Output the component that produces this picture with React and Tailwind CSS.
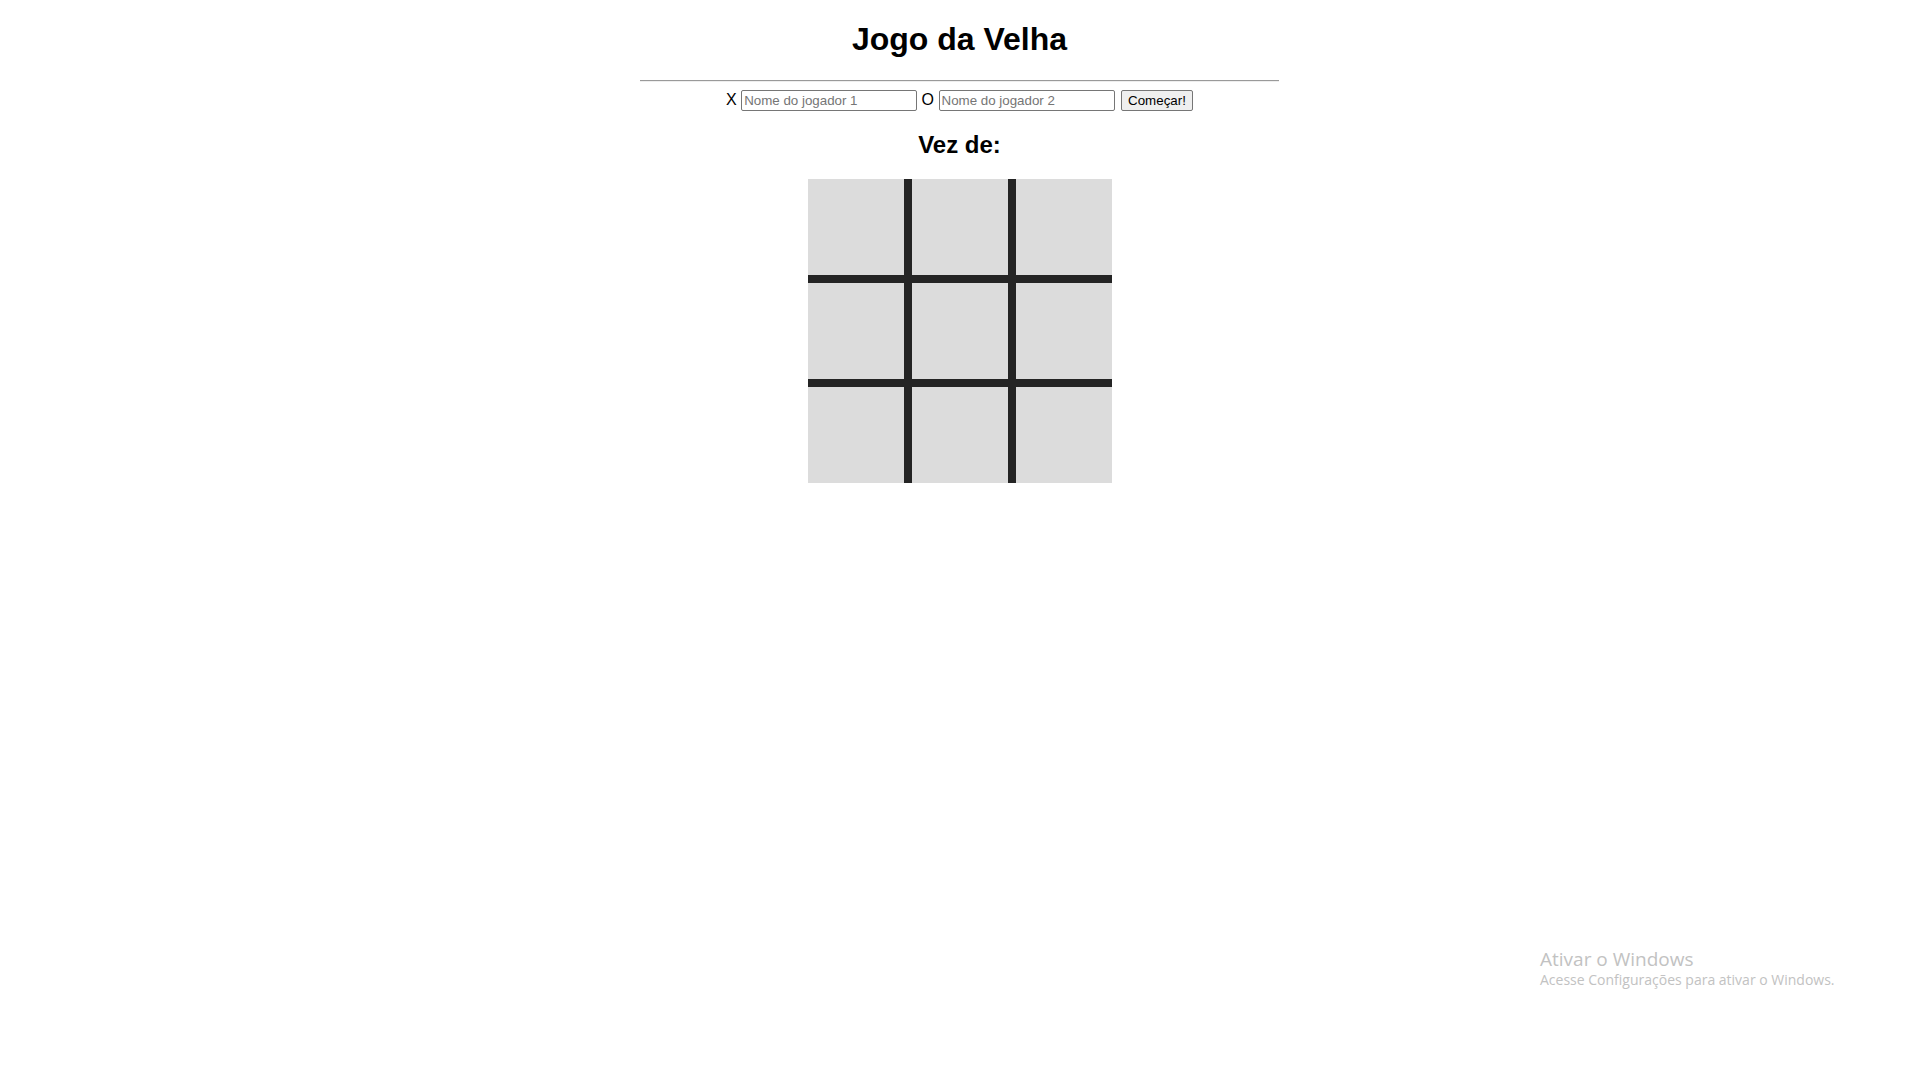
import React from 'react';

const cells = [0, 1, 2, 3, 4, 5, 6, 7, 8];

const App = () => {
    return (
        <div className="min-h-screen bg-white text-black text-center leading-[normal] font-['Liberation_Sans',Arial,sans-serif] pt-[21.44px]">
            {/* Title */}
            <h1 className="text-[32px] font-bold leading-[normal]">Jogo da Velha</h1>

            <hr className="w-1/3 mx-auto mt-[21.44px] h-[2px] border-t border-b border-t-[#9a9a9a] border-b-[#eeeeee]" />

            {/* Players */}
            <div className="mt-[8px] text-[16px]">
                X{' '}
                <input
                    type="text"
                    placeholder="Nome do jogador 1"
                    className="inline-block align-baseline w-[176px] h-[21px] px-[2px] py-[1px] border border-[#767676] rounded-[2px] text-[13.33px] text-left placeholder:text-[#757575] outline-none"
                />{' '}
                O{' '}
                <input
                    type="text"
                    placeholder="Nome do jogador 2"
                    className="inline-block align-baseline w-[176px] h-[21px] px-[2px] py-[1px] border border-[#767676] rounded-[2px] text-[13.33px] text-left placeholder:text-[#757575] outline-none"
                />{' '}
                <button className="inline-block align-baseline ml-[2px] w-[72px] h-[21px] px-[6px] border border-[#767676] rounded-[2px] bg-[#efefef] text-[13.33px] text-black">
                    Começar!
                </button>
            </div>

            <h2 className="mt-[19.92px] text-[24px] font-bold leading-[normal]">Vez de:</h2>

            {/* Board */}
            <div className="mx-auto mt-[19.92px] w-[304px] grid grid-cols-3 gap-[8px] bg-[#242424]">
                {cells.map((n) => (
                    <div key={n} className="h-[96px] bg-[#dcdcdc]" />
                ))}
            </div>

            {/* Windows activation watermark */}
            <div className="absolute left-[1540px] top-[949px] text-left text-[#c2c2c2] font-['Open_Sans',sans-serif] pointer-events-none">
                <p className="text-[19px] leading-[21px]">Ativar o Windows</p>
                <p className="text-[14px] leading-[19px]">Acesse Configurações para ativar o Windows.</p>
            </div>
        </div>
    );
};

export default App;
